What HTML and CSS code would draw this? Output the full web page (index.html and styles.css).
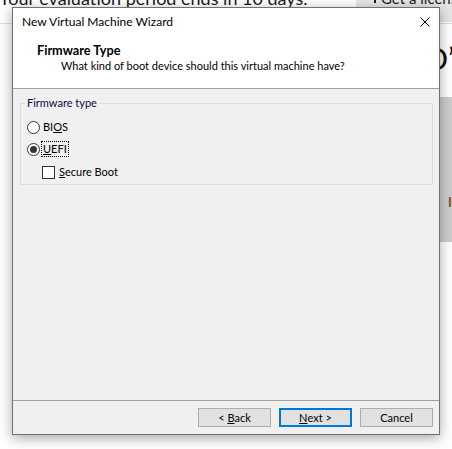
FILE: index.html
```html
<!DOCTYPE html>
<html>
<head>
<meta charset="utf-8">
<link rel="stylesheet" href="styles.css">
</head>
<body>
<div class="desk">
  <div class="topbar">
    <div class="eval">Your evaluation period ends in 10 days.</div>
    <div class="license"><span class="lic-icon"></span>Get a license</div>
  </div>
  <div class="hero">O’</div>
  <div class="band"><span class="band-text">I</span></div>
  <div class="rest"></div>
</div>

<div class="dialog">
  <div class="header">
    <div class="titlebar">
      <span class="title">New Virtual Machine Wizard</span>
      <span class="close"><svg width="10" height="10" viewBox="0 0 10 10"><path d="M0.5 0.5 L9.5 9.5 M9.5 0.5 L0.5 9.5" stroke="#000" stroke-width="1" fill="none"/></svg></span>
    </div>
    <div class="page-title">Firmware Type</div>
    <div class="page-sub">What kind of boot device should this virtual machine have?</div>
  </div>
  <div class="body">
    <fieldset class="group">
      <legend>Firmware type</legend>
      <div class="row">
        <span class="radio"></span><span class="lbl">BI<u>O</u>S</span>
      </div>
      <div class="row">
        <span class="radio checked"></span><span class="lbl focus"><u>U</u>EFI</span>
      </div>
      <div class="row sub">
        <span class="check"></span><span class="lbl"><u>S</u>ecure Boot</span>
      </div>
    </fieldset>
  </div>
  <div class="footer">
    <span class="btn">&lt;&nbsp;<u>B</u>ack</span>
    <span class="btn default"><u>N</u>ext&nbsp;&gt;</span>
    <span class="btn">Cancel</span>
  </div>
</div>
</body>
</html>
```
FILE: styles.css
```css
html, body {
  margin: 0;
  padding: 0;
}
body {
  width: 452px;
  height: 449px;
  overflow: hidden;
  position: relative;
  background: #ffffff;
  font-family: Lato, "Noto Sans", "Liberation Sans", sans-serif;
  font-size: 11px;
  color: #000;
}

/* background application */
.desk {
  display: flex;
  flex-direction: column;
  height: 449px;
}
.topbar {
  display: flex;
  height: 23px;
  border-bottom: 1px solid #dcdcdc;
  overflow: hidden;
}
.eval {
  flex: 1;
  font-size: 18px;
  line-height: 20px;
  margin-top: -12px;
  margin-left: -1px;
  color: #1a1a1a;
  white-space: nowrap;
}
.license {
  width: 96px;
  background: #e6e6e6;
  font-size: 15px;
  line-height: 16px;
  margin-top: -9px;
  padding-left: 18px;
  box-sizing: border-box;
  white-space: nowrap;
  color: #1a1a1a;
  display: flex;
  align-items: flex-end;
  height: 31px;
  padding-bottom: 16px;
}
.lic-icon {
  display: inline-block;
  width: 6px;
  height: 8px;
  border: 1px solid #1a1a1a;
  border-top: none;
  margin: 0 5px 3px 0;
}
.hero {
  height: 73px;
  font-size: 30px;
  line-height: 32px;
  padding-top: 18px;
  padding-left: 424px;
  box-sizing: border-box;
  color: #111;
  white-space: nowrap;
  overflow: hidden;
}
.band {
  height: 145px;
  margin-left: 300px;
  background: #cdcdcd;
  padding-left: 148px;
  padding-top: 98px;
  box-sizing: border-box;
  overflow: hidden;
}
.band-text {
  color: #8a4a10;
  font-size: 13px;
  line-height: 14px;
  font-weight: bold;
}
.rest {
  flex: 1;
  background: #ffffff;
}

/* dialog window */
.dialog {
  position: absolute;
  left: 12px;
  top: 7px;
  width: 426px;
  height: 426px;
  border: 1px solid #717171;
  background: #f0f0f0;
  box-shadow: 0 3px 12px rgba(0, 0, 0, 0.35);
  display: flex;
  flex-direction: column;
}
.header {
  background: #ffffff;
  border-bottom: 1px solid #a0a0a0;
  height: 80px;
  box-sizing: content-box;
}
.titlebar {
  height: 27px;
  display: flex;
  align-items: center;
  justify-content: space-between;
  padding-left: 9px;
}
.title {
  font-size: 12px;
  line-height: 16px;
}
.close {
  width: 28px;
  height: 27px;
  display: flex;
  align-items: center;
  justify-content: center;
}
.page-title {
  font-size: 12.7px;
  font-weight: bold;
  line-height: 16px;
  margin-top: 7px;
  padding-left: 24px;
}
.page-sub {
  line-height: 16px;
  padding-left: 48px;
}
.body {
  flex: 1;
}
.group {
  margin: 7px 6px 0 7px;
  padding: 6px 6px 0 6px;
  border: 1px solid #dcdcdc;
}
.group legend {
  padding: 0 2px;
  margin-left: -2px;
  line-height: 14px;
  color: #0a0a40;
}
.row {
  display: flex;
  align-items: center;
  height: 22px;
}
.row.sub {
  height: 24px;
  padding-left: 15px;
}
.radio {
  width: 11px;
  height: 11px;
  border: 1px solid #333;
  border-radius: 50%;
  background: #fff;
  position: relative;
  margin-right: 2px;
}
.radio.checked::after {
  content: "";
  position: absolute;
  left: 2px;
  top: 2px;
  width: 7px;
  height: 7px;
  border-radius: 50%;
  background: #333;
}
.check {
  width: 11px;
  height: 11px;
  border: 1px solid #333;
  background: #fff;
  margin-right: 3px;
}
.lbl {
  line-height: 14px;
  padding: 0 1px;
  border: 1px solid transparent;
  margin-left: -1px;
}
.lbl.focus {
  border: 1px dotted #000;
}
.footer {
  border-top: 1px solid #a0a0a0;
  padding: 7px 6px 7px 0;
  display: flex;
  justify-content: flex-end;
  gap: 8px;
}
.btn {
  width: 73px;
  height: 19px;
  box-sizing: border-box;
  border: 1px solid #adadad;
  background: #e1e1e1;
  display: flex;
  align-items: center;
  justify-content: center;
  line-height: 14px;
}
.btn.default {
  border: 2px solid #0078d7;
}
```
